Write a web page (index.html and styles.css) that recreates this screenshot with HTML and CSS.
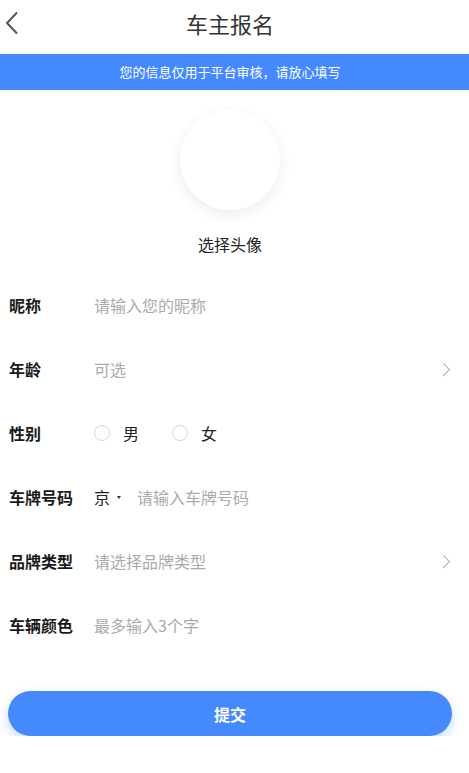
FILE: index.html
```html
<!DOCTYPE html>
<html lang="zh-CN">
<head>
    <meta charset="UTF-8">
    <meta name="viewport" content="width=device-width, initial-scale=1.0">
    <title>车主报名</title>
    <link rel="stylesheet" href="styles.css">
</head>
<body>
    <div class="header">
        <span class="back">
            <svg width="14" height="24" viewBox="0 0 14 24"><path d="M12 1.5L2 12l10 10.5" fill="none" stroke="#555" stroke-width="2"/></svg>
        </span>
        <h1>车主报名</h1>
    </div>
    <div class="notice">您的信息仅用于平台审核，请放心填写</div>

    <div class="avatar-box">
        <div class="avatar"></div>
        <p>选择头像</p>
    </div>

    <div class="form">
        <div class="row">
            <span class="label">昵称</span>
            <span class="value placeholder">请输入您的昵称</span>
        </div>
        <div class="row">
            <span class="label">年龄</span>
            <span class="value placeholder">可选</span>
            <span class="arrow"><svg width="9" height="15" viewBox="0 0 9 15"><path d="M1 1l6.5 6.5L1 14" fill="none" stroke="#bbb" stroke-width="1.2"/></svg></span>
        </div>
        <div class="row">
            <span class="label">性别</span>
            <span class="value radios">
                <span class="radio"><i></i>男</span>
                <span class="radio"><i></i>女</span>
            </span>
        </div>
        <div class="row">
            <span class="label">车牌号码</span>
            <span class="value">
                <span class="city">京<b></b></span>
                <span class="placeholder">请输入车牌号码</span>
            </span>
        </div>
        <div class="row">
            <span class="label">品牌类型</span>
            <span class="value placeholder">请选择品牌类型</span>
            <span class="arrow"><svg width="9" height="15" viewBox="0 0 9 15"><path d="M1 1l6.5 6.5L1 14" fill="none" stroke="#bbb" stroke-width="1.2"/></svg></span>
        </div>
        <div class="row">
            <span class="label">车辆颜色</span>
            <span class="value placeholder">最多输入3个字</span>
        </div>
    </div>

    <button class="submit">提交</button>
</body>
</html>
```

FILE: styles.css
```css
body {
    margin: 0;
    background: #fff;
    font-family: "Noto Sans CJK SC", "Noto Sans", sans-serif;
    color: #222;
}
.header {
    height: 54px;
    box-sizing: border-box;
    display: flex;
    align-items: center;
    justify-content: center;
    position: relative;
    padding: 0 9px 9px 0;
}
.header h1 {
    margin: 0;
    font-size: 22px;
    line-height: 30px;
    font-weight: normal;
    color: #333;
}
.back {
    position: absolute;
    left: 5px;
    top: 11px;
}
.notice {
    height: 36px;
    line-height: 36px;
    background: #4589ff;
    color: #fff;
    font-size: 13px;
    text-align: center;
    padding-right: 9px;
}
.avatar-box {
    display: flex;
    flex-direction: column;
    align-items: center;
    padding: 20px 9px 0 0;
    height: 163px;
}
.avatar {
    width: 100px;
    height: 100px;
    border-radius: 50%;
    background: #fff;
    box-shadow: 0 4px 14px rgba(0, 0, 0, 0.08);
}
.avatar-box p {
    margin: 23px 0 0;
    font-size: 16px;
    line-height: 22px;
    color: #222;
}
.row {
    height: 64px;
    display: flex;
    align-items: center;
    padding: 0 18px 0 9px;
}
.label {
    width: 85px;
    font-size: 16px;
    font-weight: bold;
    color: #1a1a1a;
}
.value {
    flex: 1;
    font-size: 16px;
    display: flex;
    align-items: center;
}
.placeholder {
    color: #aaa;
}
.arrow {
    display: flex;
}
.radio {
    display: flex;
    align-items: center;
    color: #222;
    margin-right: 33px;
}
.radio i {
    width: 14px;
    height: 14px;
    border: 1px solid #d8d8d8;
    border-radius: 50%;
    margin-right: 13px;
}
.city {
    display: flex;
    align-items: center;
    color: #222;
    margin-right: 16px;
}
.city b {
    width: 0;
    height: 0;
    border-left: 2.5px solid transparent;
    border-right: 2.5px solid transparent;
    border-top: 3px solid #333;
    margin-left: 7px;
}
.submit {
    display: block;
    width: 444px;
    height: 45px;
    margin: 34px 0 0 8px;
    border: 0;
    border-radius: 23px;
    background: #4589ff;
    color: #fff;
    font-family: inherit;
    font-size: 16px;
    font-weight: bold;
    box-shadow: 0 5px 12px rgba(69, 137, 255, 0.3);
}
```
